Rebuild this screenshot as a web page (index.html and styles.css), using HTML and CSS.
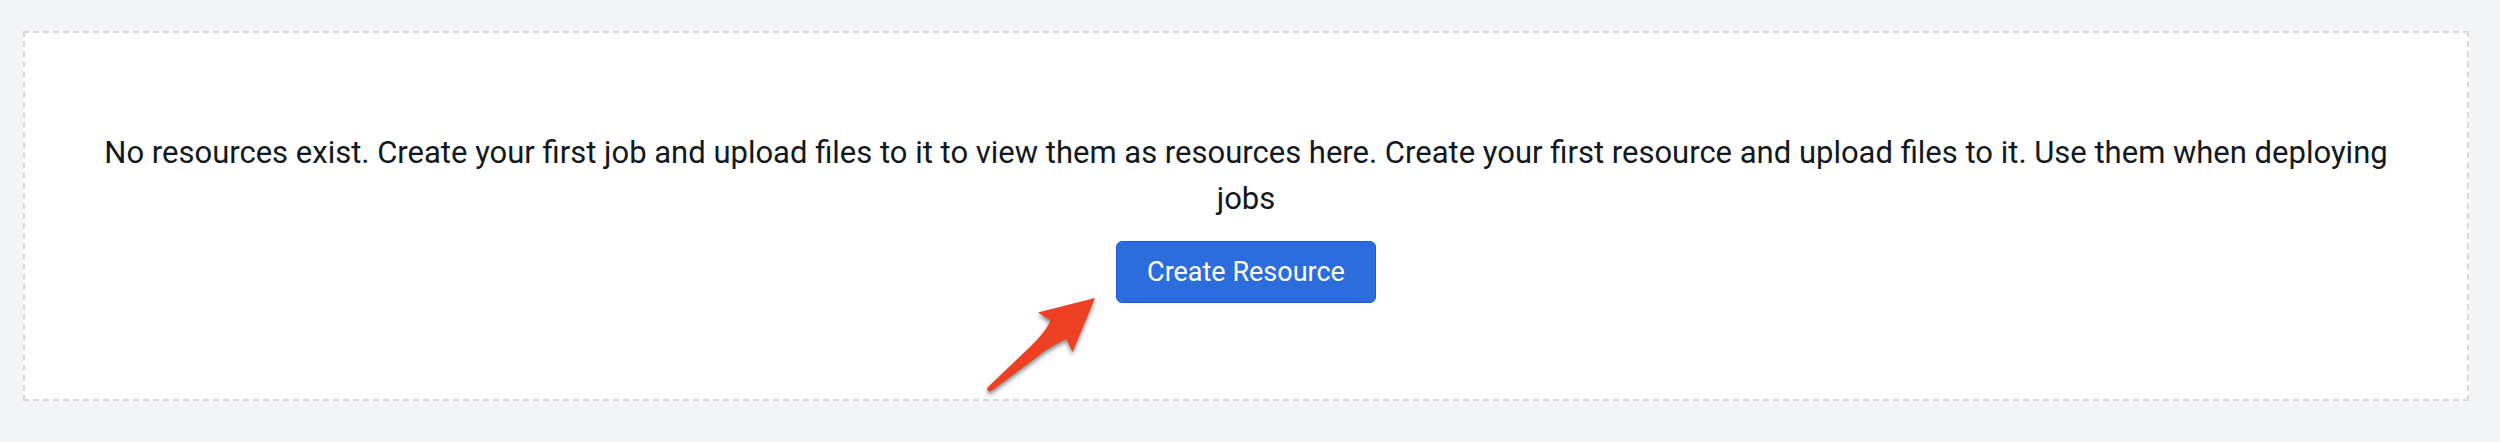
FILE: index.html
```html
<!DOCTYPE html>
<html lang="en">
<head>
  <meta charset="utf-8">
  <meta name="viewport" content="width=device-width, initial-scale=1">
  <title>Resources</title>
  <link rel="stylesheet" href="styles.css">
</head>
<body>
  <main class="page">
    <section class="empty-state">
      <p class="empty-state__text">No resources exist. Create your first job and upload files to it to view them as resources here. Create your first resource and upload files to it. Use them when deploying jobs</p>
      <div class="empty-state__action">
        <button class="button" type="button">Create Resource</button>
        <svg class="pointer" viewBox="0 0 124 108" aria-hidden="true">
          <path d="M115 8 L58 22.500 L70.500 30.500 C67 39 60 47 51 56 L8 97 C5.500 100 9 103 12 100.500 L55 68.500 C64 61 77 53 86.500 49 L92.500 62 Z"/>
        </svg>
      </div>
    </section>
  </main>
</body>
</html>
```
FILE: styles.css
```css
* {
  box-sizing: border-box;
}

body {
  margin: 0;
  background: #f4f5f7;
  color: #111820;
  font-family: Roboto, "Liberation Sans", sans-serif;
}

.page {
  padding: 31px 31px 40px 23px;
}

.empty-state {
  display: flex;
  flex-direction: column;
  align-items: center;
  gap: 19px;
  padding: 97px 72px 96px;
  border: 2px dashed #d7d9dc;
  background: #fff;
}

.empty-state__text {
  margin: 0;
  font-size: 31px;
  line-height: 46px;
  text-align: center;
}

.empty-state__action {
  position: relative;
}

.button {
  display: block;
  padding: 15px 30px;
  border: 1px solid #1a5fdb;
  border-radius: 6px;
  background: #2d6cdc;
  color: #fff;
  font-family: inherit;
  font-size: 27px;
  font-weight: 400;
  line-height: 30px;
  cursor: pointer;
}

.pointer {
  position: absolute;
  top: 49px;
  right: calc(100% + 12px);
  width: 124px;
  height: 108px;
  fill: #ee4023;
  filter: drop-shadow(0 3px 2px rgba(0, 0, 0, 0.45));
  pointer-events: none;
}
```
